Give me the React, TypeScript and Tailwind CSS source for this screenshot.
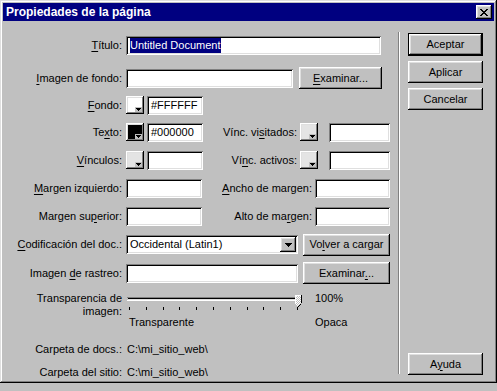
import React from 'react';

// Win98-style "Propiedades de la página" dialog
const raised =
  'bg-[#c0c0c0] shadow-[inset_-1px_-1px_#000000,inset_1px_1px_#ffffff,inset_-2px_-2px_#808080,inset_2px_2px_#dfdfdf]';
const sunken =
  'bg-white shadow-[inset_1px_1px_#808080,inset_-1px_-1px_#ffffff,inset_2px_2px_#000000,inset_-2px_-2px_#dfdfdf]';

function U({ children }: { children: React.ReactNode }) {
  return <span className="underline underline-offset-[2px]">{children}</span>;
}

function Label({ children }: { children: React.ReactNode }) {
  return <div className="w-[119px] shrink-0 text-right whitespace-nowrap">{children}</div>;
}

function Input({ w, children }: { w: string; children?: React.ReactNode }) {
  return (
    <div className={`${sunken} ${w} h-[19px] shrink-0 flex items-center pl-[4px] whitespace-nowrap`}>
      {children}
    </div>
  );
}

function Button({ w, children, isDefault }: { w: string; children: React.ReactNode; isDefault?: boolean }) {
  if (isDefault) {
    return (
      <div className={`${w} h-[23px] border border-black shrink-0`}>
        <div className={`${raised} w-full h-full flex items-center justify-center`}>{children}</div>
      </div>
    );
  }
  return (
    <div className={`${raised} ${w} h-[22px] shrink-0 flex items-center justify-center whitespace-nowrap`}>
      {children}
    </div>
  );
}

function Swatch({ fill }: { fill: string }) {
  return (
    <div className={`${raised} relative w-[18px] h-[18px] shrink-0`}>
      <div className="absolute left-[2px] top-[2px] right-[2px] bottom-[2px]" style={{ background: fill }} />
      <div className="absolute right-[2px] bottom-[2px] w-[7px] h-[5px] bg-[#c0c0c0] flex items-center justify-center">
        <svg width="5" height="3" viewBox="0 0 5 3" shapeRendering="crispEdges">
          <path d="M0 0h5v1H0zM1 1h3v1H1zM2 2h1v1H2z" fill="#000" />
        </svg>
      </div>
    </div>
  );
}

function CloseGlyph() {
  const rows = ['XX....XX', '.XX..XX.', '..XXXX..', '...XX...', '..XXXX..', '.XX..XX.', 'XX....XX'];
  return (
    <svg width="8" height="7" viewBox="0 0 8 7" shapeRendering="crispEdges">
      {rows.map((r, y) =>
        r.split('').map((c, x) => (c === 'X' ? <rect key={`${x}-${y}`} x={x} y={y} width="1" height="1" fill="#000" /> : null)),
      )}
    </svg>
  );
}

function Slider() {
  const ticks = Array.from({ length: 11 }, (_, i) => 3 + i * 16.8);
  return (
    <svg width="176" height="24" viewBox="0 0 176 24" shapeRendering="crispEdges" className="block">
      <defs>
        <pattern id="dith" width="2" height="2" patternUnits="userSpaceOnUse">
          <rect width="2" height="2" fill="#c0c0c0" />
          <rect width="1" height="1" fill="#ffffff" />
          <rect x="1" y="1" width="1" height="1" fill="#ffffff" />
        </pattern>
      </defs>
      <rect x="1" y="5" width="174" height="1" fill="#808080" />
      <rect x="2" y="6" width="172" height="1" fill="#000" />
      <rect x="2" y="7" width="172" height="1" fill="#dfdfdf" />
      <rect x="1" y="8" width="174" height="1" fill="#ffffff" />
      {ticks.map((t, i) => (
        <rect key={i} x={Math.round(t)} y="15" width="1" height="3" fill="#000" />
      ))}
      {/* thumb */}
      <path d="M169 3h6v8l-3 4l-3-4z" fill="url(#dith)" />
      <path d="M169 3h6v1h-5v7h-1z" fill="#ffffff" />
      <path d="M175 3h1v8h-1zM172 14h1v1h-1zM173 13h1v1h-1zM174 12h1v1h-1z" fill="#000" />
      <path d="M170 12h1v1h-1zM171 13h1v1h-1z" fill="#ffffff" />
    </svg>
  );
}

export default function App() {
  return (
    <div className="w-[497px] h-[391px] bg-[#c0c0c0] text-[11px] leading-[13px] text-black font-['Liberation_Sans',Arial,sans-serif]">
      <div className="h-[383px] p-[3px] flex flex-col shadow-[inset_-1px_-1px_#000000,inset_1px_1px_#dfdfdf,inset_-2px_-2px_#808080,inset_2px_2px_#ffffff]">
        {/* title bar */}
        <div className="h-[18px] bg-[#000080] flex items-center justify-between pl-[3px] pr-[2px] shrink-0">
          <span className="text-white font-bold text-[12px]">Propiedades de la página</span>
          <div className={`${raised} w-[16px] h-[14px] flex items-center justify-center`}>
            <CloseGlyph />
          </div>
        </div>

        <div className="flex flex-row">
          {/* form */}
          <div className="w-[395px] pt-[10px] shrink-0">
            <div className="flex items-center h-[28px]">
              <Label>
                <U>T</U>ítulo:
              </Label>
              <div className="ml-[4px]">
                <Input w="w-[255px]">
                  <span className="bg-[#000080] text-white leading-[15px]">Untitled Document</span>
                </Input>
              </div>
            </div>

            <div className="flex items-center h-[28px] mt-[5px]">
              <Label>
                <U>I</U>magen de fondo:
              </Label>
              <div className="ml-[4px] flex items-center">
                <Input w="w-[167px]" />
                <div className="ml-[6px]">
                  <Button w="w-[83px]">
                    <span>
                      <U>E</U>xaminar...
                    </span>
                  </Button>
                </div>
              </div>
            </div>

            <div className="flex items-center h-[26px]">
              <Label>
                <U>F</U>ondo:
              </Label>
              <div className="ml-[4px] flex items-center">
                <Swatch fill="#ffffff" />
                <div className="ml-[3px]">
                  <Input w="w-[56px]">#FFFFFF</Input>
                </div>
              </div>
            </div>

            <div className="flex items-center h-[28px]">
              <Label>
                Te<U>x</U>to:
              </Label>
              <div className="ml-[4px] flex items-center">
                <Swatch fill="#000000" />
                <div className="ml-[3px]">
                  <Input w="w-[56px]">#000000</Input>
                </div>
                <div className="w-[94px] text-right">
                  Vínc. vi<U>s</U>itados:
                </div>
                <div className="ml-[3px]">
                  <Swatch fill="#e4e4e4" />
                </div>
                <div className="ml-[11px]">
                  <Input w="w-[61px]" />
                </div>
              </div>
            </div>

            <div className="flex items-center h-[28px]">
              <Label>
                <U>V</U>ínculos:
              </Label>
              <div className="ml-[4px] flex items-center">
                <Swatch fill="#e4e4e4" />
                <div className="ml-[3px]">
                  <Input w="w-[56px]" />
                </div>
                <div className="w-[94px] text-right">
                  Ví<U>n</U>c. activos:
                </div>
                <div className="ml-[3px]">
                  <Swatch fill="#e4e4e4" />
                </div>
                <div className="ml-[11px]">
                  <Input w="w-[61px]" />
                </div>
              </div>
            </div>

            <div className="flex items-center h-[28px]">
              <Label>
                <U>M</U>argen izquierdo:
              </Label>
              <div className="ml-[4px] flex items-center">
                <Input w="w-[76px]" />
                <div className="w-[110px] text-right">
                  <U>A</U>ncho de margen:
                </div>
                <div className="ml-[3px]">
                  <Input w="w-[75px]" />
                </div>
              </div>
            </div>

            <div className="flex items-center h-[28px]">
              <Label>
                Margen su<U>p</U>erior:
              </Label>
              <div className="ml-[4px] flex items-center">
                <Input w="w-[76px]" />
                <div className="w-[110px] text-right">
                  Alto de ma<U>r</U>gen:
                </div>
                <div className="ml-[3px]">
                  <Input w="w-[75px]" />
                </div>
              </div>
            </div>

            <div className="flex items-center h-[29px]">
              <Label>
                <U>C</U>odificación del doc.:
              </Label>
              <div className="ml-[4px] flex items-center">
                <div className={`${sunken} w-[172px] h-[19px] flex items-center justify-between pl-[4px] pr-[2px]`}>
                  <span>Occidental (Latin1)</span>
                  <div className={`${raised} w-[16px] h-[15px] flex items-center justify-center`}>
                    <svg width="7" height="4" viewBox="0 0 7 4" shapeRendering="crispEdges">
                      <path d="M0 0h7v1H0zM1 1h5v1H1zM2 2h3v1H2zM3 3h1v1H3z" fill="#000" />
                    </svg>
                  </div>
                </div>
                <div className="ml-[5px]">
                  <Button w="w-[87px]">
                    <span>
                      Vo<U>l</U>ver a cargar
                    </span>
                  </Button>
                </div>
              </div>
            </div>

            <div className="flex items-center h-[28px]">
              <Label>
                Imagen <U>d</U>e rastreo:
              </Label>
              <div className="ml-[4px] flex items-center">
                <Input w="w-[172px]" />
                <div className="ml-[5px]">
                  <Button w="w-[87px]">
                    <span>
                      Examinar<U>.</U>..
                    </span>
                  </Button>
                </div>
              </div>
            </div>

            <div className="flex items-start">
              <div className="w-[119px] text-right pt-[5px]">
                <div>Transparencia de</div>
                <div>imagen:</div>
              </div>
              <div className="ml-[4px] w-[176px] pt-[5px]">
                <Slider />
                <div className="pl-[3px]">Transparente</div>
              </div>
              <div className="ml-[13px] pt-[5px]">
                <div>100%</div>
                <div className="mt-[11px]">Opaca</div>
              </div>
            </div>

            <div className="flex items-center h-[18px] mt-[11px]">
              <Label>Carpeta de docs.:</Label>
              <div className="ml-[5px]">C:\mi_sitio_web\</div>
            </div>
            <div className="flex items-center h-[18px] mt-[5px]">
              <Label>Carpeta del sitio:</Label>
              <div className="ml-[5px]">C:\mi_sitio_web\</div>
            </div>
          </div>

          {/* etched separator */}
          <div className="mt-[11px] h-[342px] w-[2px] border-l border-l-[#808080] border-r border-r-white shrink-0" />

          {/* buttons */}
          <div className="pl-[8px] pt-[12px] flex flex-col">
            <Button w="w-[75px]" isDefault>
              Aceptar
            </Button>
            <div className="mt-[5px]">
              <Button w="w-[75px]">Aplicar</Button>
            </div>
            <div className="mt-[5px]">
              <Button w="w-[75px]">Cancelar</Button>
            </div>
            <div className="mt-[243px]">
              <Button w="w-[75px]">
                <span>
                  A<U>y</U>uda
                </span>
              </Button>
            </div>
          </div>
        </div>
      </div>
    </div>
  );
}
